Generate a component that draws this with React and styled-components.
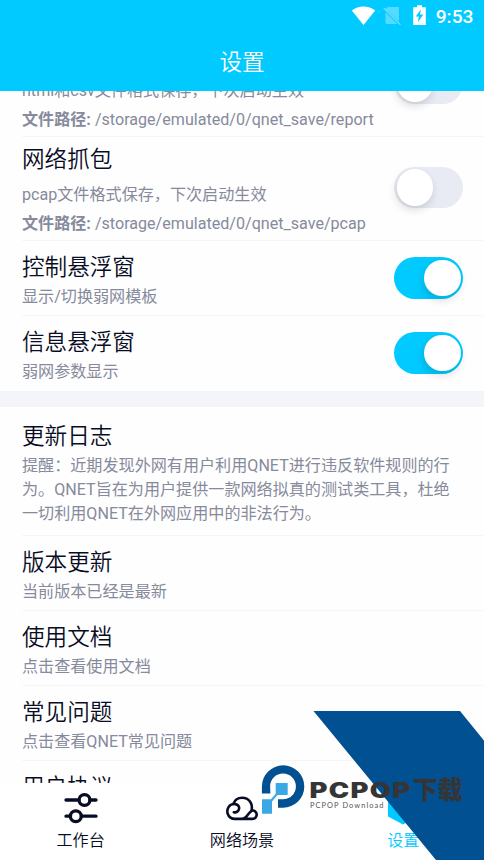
import React from "react";
import styled, { createGlobalStyle } from "styled-components";

const GlobalStyle = createGlobalStyle`
  * { box-sizing: border-box; }
  body {
    margin: 0;
    background: #fff;
    font-family: Roboto, "Noto Sans CJK SC", sans-serif;
  }
`;

const Screen = styled.div`
  position: relative;
  display: flex;
  flex-direction: column;
  width: 484px;
  height: 860px;
  overflow: hidden;
  background: #fefefe;
`;

const Header = styled.header`
  flex: none;
  height: 91px;
  background: #00caff;
  color: #fff;
`;

const StatusBar = styled.div`
  display: flex;
  justify-content: flex-end;
  align-items: center;
  height: 34px;
  padding-right: 10.5px;
`;

const StatusIcons = styled.svg`
  display: block;
  margin: -2px 8.5px 0 0;
`;

const Clock = styled.span`
  font-size: 19.2px;
  font-weight: 500;
  line-height: 34px;
`;

const PageTitle = styled.h1`
  margin: 0;
  text-align: center;
  font-size: 22.6px;
  font-weight: 350;
  line-height: 58px;
`;

const Viewport = styled.main`
  flex: 1;
  min-height: 0;
  overflow: hidden;
`;

const Scrolled = styled.div`
  margin-top: -58px;
`;

const Row = styled.section`
  display: flex;
  justify-content: space-between;
  height: ${(p) => p.$height}px;
  margin-left: 22px;
  padding: ${(p) => p.$top}px 21px 0 0;
  border-bottom: ${(p) => (p.$last ? "0" : "1px solid #f6f6f9")};
`;

const RowText = styled.div`
  flex: 1;
  white-space: nowrap;
`;

const RowTitle = styled.h2`
  margin: 0 0 ${(p) => p.$gap}px;
  color: #080c24;
  font-size: 22.6px;
  font-weight: 350;
  line-height: 32px;
`;

const Note = styled.p`
  margin: 0;
  color: #868a9c;
  font-size: 16.1px;
  line-height: ${(p) => p.$line || 24.2}px;
`;

const PathLabel = styled.b`
  font-weight: 700;
`;

const Divider = styled.div`
  height: 16px;
  background: #f4f5fa;
`;

const Track = styled.div`
  flex: none;
  width: 69px;
  height: 41.5px;
  margin-top: ${(p) => p.$offset}px;
  padding: 2.5px;
  display: flex;
  justify-content: ${(p) => (p.$on ? "flex-end" : "flex-start")};
  border-radius: 21px;
  background: ${(p) => (p.$on ? "#00caff" : "#e8ebf4")};
`;

const Knob = styled.div`
  width: 36.5px;
  height: 36.5px;
  border-radius: 50%;
  background: #fff;
  box-shadow: -1px 4px 8px rgba(0, 0, 0, 0.14);
`;

const TabBar = styled.nav`
  flex: none;
  display: grid;
  grid-template-columns: repeat(3, 1fr);
  height: 77px;
  background: #fff;
`;

const Tab = styled.div`
  display: flex;
  flex-direction: column;
  align-items: center;
  padding-top: 8px;
  color: ${(p) => (p.$active ? "#00caff" : "#080c24")};
  font-size: 16.1px;
  font-weight: 350;
  line-height: 24px;
`;

const TabIcon = styled.svg`
  display: block;
  margin-bottom: 4px;
`;

const Watermark = styled.svg`
  position: absolute;
  right: 0;
  bottom: 0;
`;

const WatermarkName = styled.text`
  font-family: Inter, "Noto Sans CJK SC", sans-serif;
  font-weight: 900;
  fill: #353536;
`;

const WatermarkSub = styled.text`
  font-family: Lato, sans-serif;
  font-size: 7.4px;
  fill: #555;
`;

function Switch({ on, offset }) {
  return (
    <Track $on={on} $offset={offset}>
      <Knob />
    </Track>
  );
}

function CaptureRow({ title, note, path }) {
  return (
    <Row $height={104} $top={7.2}>
      <RowText>
        <RowTitle $gap={6.8}>{title}</RowTitle>
        <Note $line={24}>{note}</Note>
        <Note $line={34}>
          <PathLabel>文件路径:</PathLabel> {path}
        </Note>
      </RowText>
      <Switch offset={22.8} />
    </Row>
  );
}

function SimpleRow({ title, note, on, last, height = 75.25 }) {
  return (
    <Row $height={height} $top={11} $last={last}>
      <RowText>
        <RowTitle $gap={1}>{title}</RowTitle>
        <Note>{note}</Note>
      </RowText>
      {on && <Switch on offset={5} />}
    </Row>
  );
}

export default function App() {
  return (
    <>
      <GlobalStyle />
      <Screen>
        <Header>
          <StatusBar>
            <StatusIcons width="76" height="24" viewBox="351 4 76 24" fill="#fff">
              <path d="M351.8 10.6C358.5 5 368.5 5 375.2 10.6L363.5 25Z" />
              <path
                d="M388 7H398.9V21.5L385.5 8.8ZM385.4 12.3L397.4 24H387Q385.4 24 385.4 22.4Z"
                opacity=".33"
              />
              <path d="M383.8 8.3L400.5 24.7" stroke="#fff" strokeWidth="1.5" opacity=".4" />
              <path d="M417 5.2H422V7.3H425.8V25.1H413.2V7.3H417Z" />
              <path d="M420.8 9.5L415.8 16.5H418.8L417.8 22.5L423.2 14.6H420Z" fill="#00caff" />
            </StatusIcons>
            <Clock>9:53</Clock>
          </StatusBar>
          <PageTitle>设置</PageTitle>
        </Header>

        <Viewport>
          <Scrolled>
            <CaptureRow
              title="测试报告"
              note="html和csv文件格式保存，下次启动生效"
              path="/storage/emulated/0/qnet_save/report"
            />
            <CaptureRow
              title="网络抓包"
              note="pcap文件格式保存，下次启动生效"
              path="/storage/emulated/0/qnet_save/pcap"
            />
            <SimpleRow title="控制悬浮窗" note="显示/切换弱网模板" on />
            <SimpleRow title="信息悬浮窗" note="弱网参数显示" on last height={74.5} />
            <Divider />
            <Row $height={128.9} $top={13.8}>
              <RowText>
                <RowTitle $gap={1.2}>更新日志</RowTitle>
                <Note>
                  提醒：近期发现外网有用户利用QNET进行违反软件规则的行
                  <br />
                  为。QNET旨在为用户提供一款网络拟真的测试类工具，杜绝
                  <br />
                  一切利用QNET在外网应用中的非法行为。
                </Note>
              </RowText>
            </Row>
            <SimpleRow title="版本更新" note="当前版本已经是最新" />
            <SimpleRow title="使用文档" note="点击查看使用文档" />
            <SimpleRow title="常见问题" note="点击查看QNET常见问题" />
            <SimpleRow title="用户协议" note="点击查看用户协议" />
          </Scrolled>
        </Viewport>

        <TabBar>
          <Tab>
            <TabIcon width="36" height="34" viewBox="0 0 36 34" fill="none" stroke="#080c24" strokeWidth="3.3" strokeLinecap="round">
              <path d="M3 9H15.5M27 9H33M3 25.2H7M18.5 25.2H33" />
              <circle cx="21.5" cy="9" r="5.4" />
              <circle cx="12.8" cy="25.2" r="5.4" />
            </TabIcon>
            工作台
          </Tab>
          <Tab>
            <TabIcon width="36" height="34" viewBox="224 791 36 34" fill="none" stroke="#080c24" strokeWidth="2.6" strokeLinecap="round" strokeLinejoin="round">
              <path d="M233.8 812.2C239.4 813.6 241.6 805.2 235.3 804.1C228.8 803.3 226.3 809.7 227.8 814C229 817.4 231.7 818.9 235 818.9H252.5C256.5 818.9 258 813.8 255.2 811.4C252.6 809.3 250.6 811.2 248.6 813.7C246.6 816.6 244.6 818.9 241.8 818.9" />
              <path d="M233.4 803.8C234.8 799.9 238.2 797.7 242.1 797.7C249 797.7 253 803.6 251.6 810.3" />
            </TabIcon>
            网络场景
          </Tab>
          <Tab $active>
            <TabIcon width="36" height="34" viewBox="0 0 36 34" fill="#00caff">
              <path d="M18 0L33 8V25.5L18 33.5L3 25.5V8Z" />
            </TabIcon>
            设置
          </Tab>
        </TabBar>

        <Watermark width="224" height="149" viewBox="260 711 224 149">
          <path d="M313.5 711H460L484 740.5V860H436Z" fill="#005092" />
          <path
            d="M270.4 793.5H261.9V786.4A21.2 21.2 0 1 1 283 807.7H278V799.3H283A12.9 12.9 0 1 0 270.1 786.4Z"
            fill="#005092"
          />
          <path
            d="M275.7 783H287.7V795H277.5L272 801.5V813.7H262V799.3H271L275.7 793.7Z"
            fill="#3aa8e4"
          />
          <WatermarkName x="309.5" y="797.5" fontSize="21" textLength="102" lengthAdjust="spacingAndGlyphs" letterSpacing="1">
            PCPOP
          </WatermarkName>
          <WatermarkName x="413" y="798.5" fontSize="24.8">
            下载
          </WatermarkName>
          <WatermarkSub x="310" y="807.5" textLength="73.5">
            PCPOP Download
          </WatermarkSub>
        </Watermark>
      </Screen>
    </>
  );
}
